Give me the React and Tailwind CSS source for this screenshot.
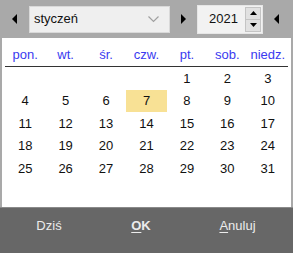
import React from 'react';

const days = ['pon.', 'wt.', 'śr.', 'czw.', 'pt.', 'sob.', 'niedz.'];

// January 2021 starts on Friday
const cells = [
  '', '', '', '', 1, 2, 3,
  4, 5, 6, 7, 8, 9, 10,
  11, 12, 13, 14, 15, 16, 17,
  18, 19, 20, 21, 22, 23, 24,
  25, 26, 27, 28, 29, 30, 31,
];

const ArrowLeft = () => (
  <svg width="6" height="10" viewBox="0 0 6 10"><path d="M5 0 L0 5 L5 10 Z" fill="#000" /></svg>
);
const ArrowRight = () => (
  <svg width="6" height="10" viewBox="0 0 6 10"><path d="M0 0 L5 5 L0 10 Z" fill="#000" /></svg>
);

const App = () => {
  return (
    <div className="w-[293px] h-[253px] flex flex-col bg-[#a9a9a9] select-none" style={{ fontFamily: '"Liberation Sans", Arial, sans-serif' }}>
      {/* Top bar: month / year pickers */}
      <div className="h-[38px] flex items-center shrink-0">
        <div className="w-[29px] flex justify-center pl-[1px]"><ArrowLeft /></div>
        <div className="w-[141px] h-[27px] bg-[#efefef] border border-[#d9d9d9] flex items-center justify-between pl-[4px] pr-[10px]">
          <span className="text-[13px] text-[#111]">styczeń</span>
          <svg width="11" height="7" viewBox="0 0 11 7"><path d="M0.5 0.5 L5.5 5.5 L10.5 0.5" fill="none" stroke="#a0a0a0" strokeWidth="1.2" /></svg>
        </div>
        <div className="w-[27px] flex justify-center"><ArrowRight /></div>
        <div className="w-[66px] h-[29px] bg-[#f2f2f2] border border-[#e6e6e6] flex items-center pl-[11px] pr-[1px]">
          <span className="text-[13px] text-[#111] flex-1">2021</span>
          <div className="w-[16px] h-[25px] flex flex-col border border-[#c4c4c4] bg-[#e1e1e1]">
            <div className="flex-1 flex items-center justify-center border-b border-[#c4c4c4]">
              <svg width="7" height="4" viewBox="0 0 7 4"><path d="M0 4 L3.5 0 L7 4 Z" fill="#000" /></svg>
            </div>
            <div className="flex-1 flex items-center justify-center">
              <svg width="7" height="4" viewBox="0 0 7 4"><path d="M0 0 L3.5 4 L7 0 Z" fill="#000" /></svg>
            </div>
          </div>
        </div>
        <div className="flex-1 flex justify-center pr-[2px]"><ArrowLeft /></div>
      </div>

      {/* Calendar body */}
      <div className="mx-[2px] h-[169px] bg-white px-[3px] shrink-0">
        <div className="grid grid-cols-7 h-[29px] items-end pb-[5px] border-b border-[#333]">
          {days.map((d) => (
            <div key={d} className="text-center text-[13px] text-[#3a3af0] leading-none">{d}</div>
          ))}
        </div>
        <div className="grid grid-cols-7">
          {cells.map((c, i) => (
            <div
              key={i}
              className={`h-[22.6px] flex items-center justify-center text-[13px] text-[#111] ${c === 7 ? 'bg-[#f8e195]' : ''}`}
            >
              {c}
            </div>
          ))}
        </div>
      </div>

      {/* Bottom buttons */}
      <div className="flex-1 bg-[#676767] border-t border-[#8a8a8a] flex items-start pt-[8px] text-[13px] text-[#ececec]">
        <div className="w-[98px] text-center">Dziś</div>
        <div className="w-[86px] text-center font-bold"><span className="underline underline-offset-2">O</span>K</div>
        <div className="flex-1 text-center pr-[2px]"><span className="underline underline-offset-2">A</span>nuluj</div>
      </div>
    </div>
  );
};

export default App;
